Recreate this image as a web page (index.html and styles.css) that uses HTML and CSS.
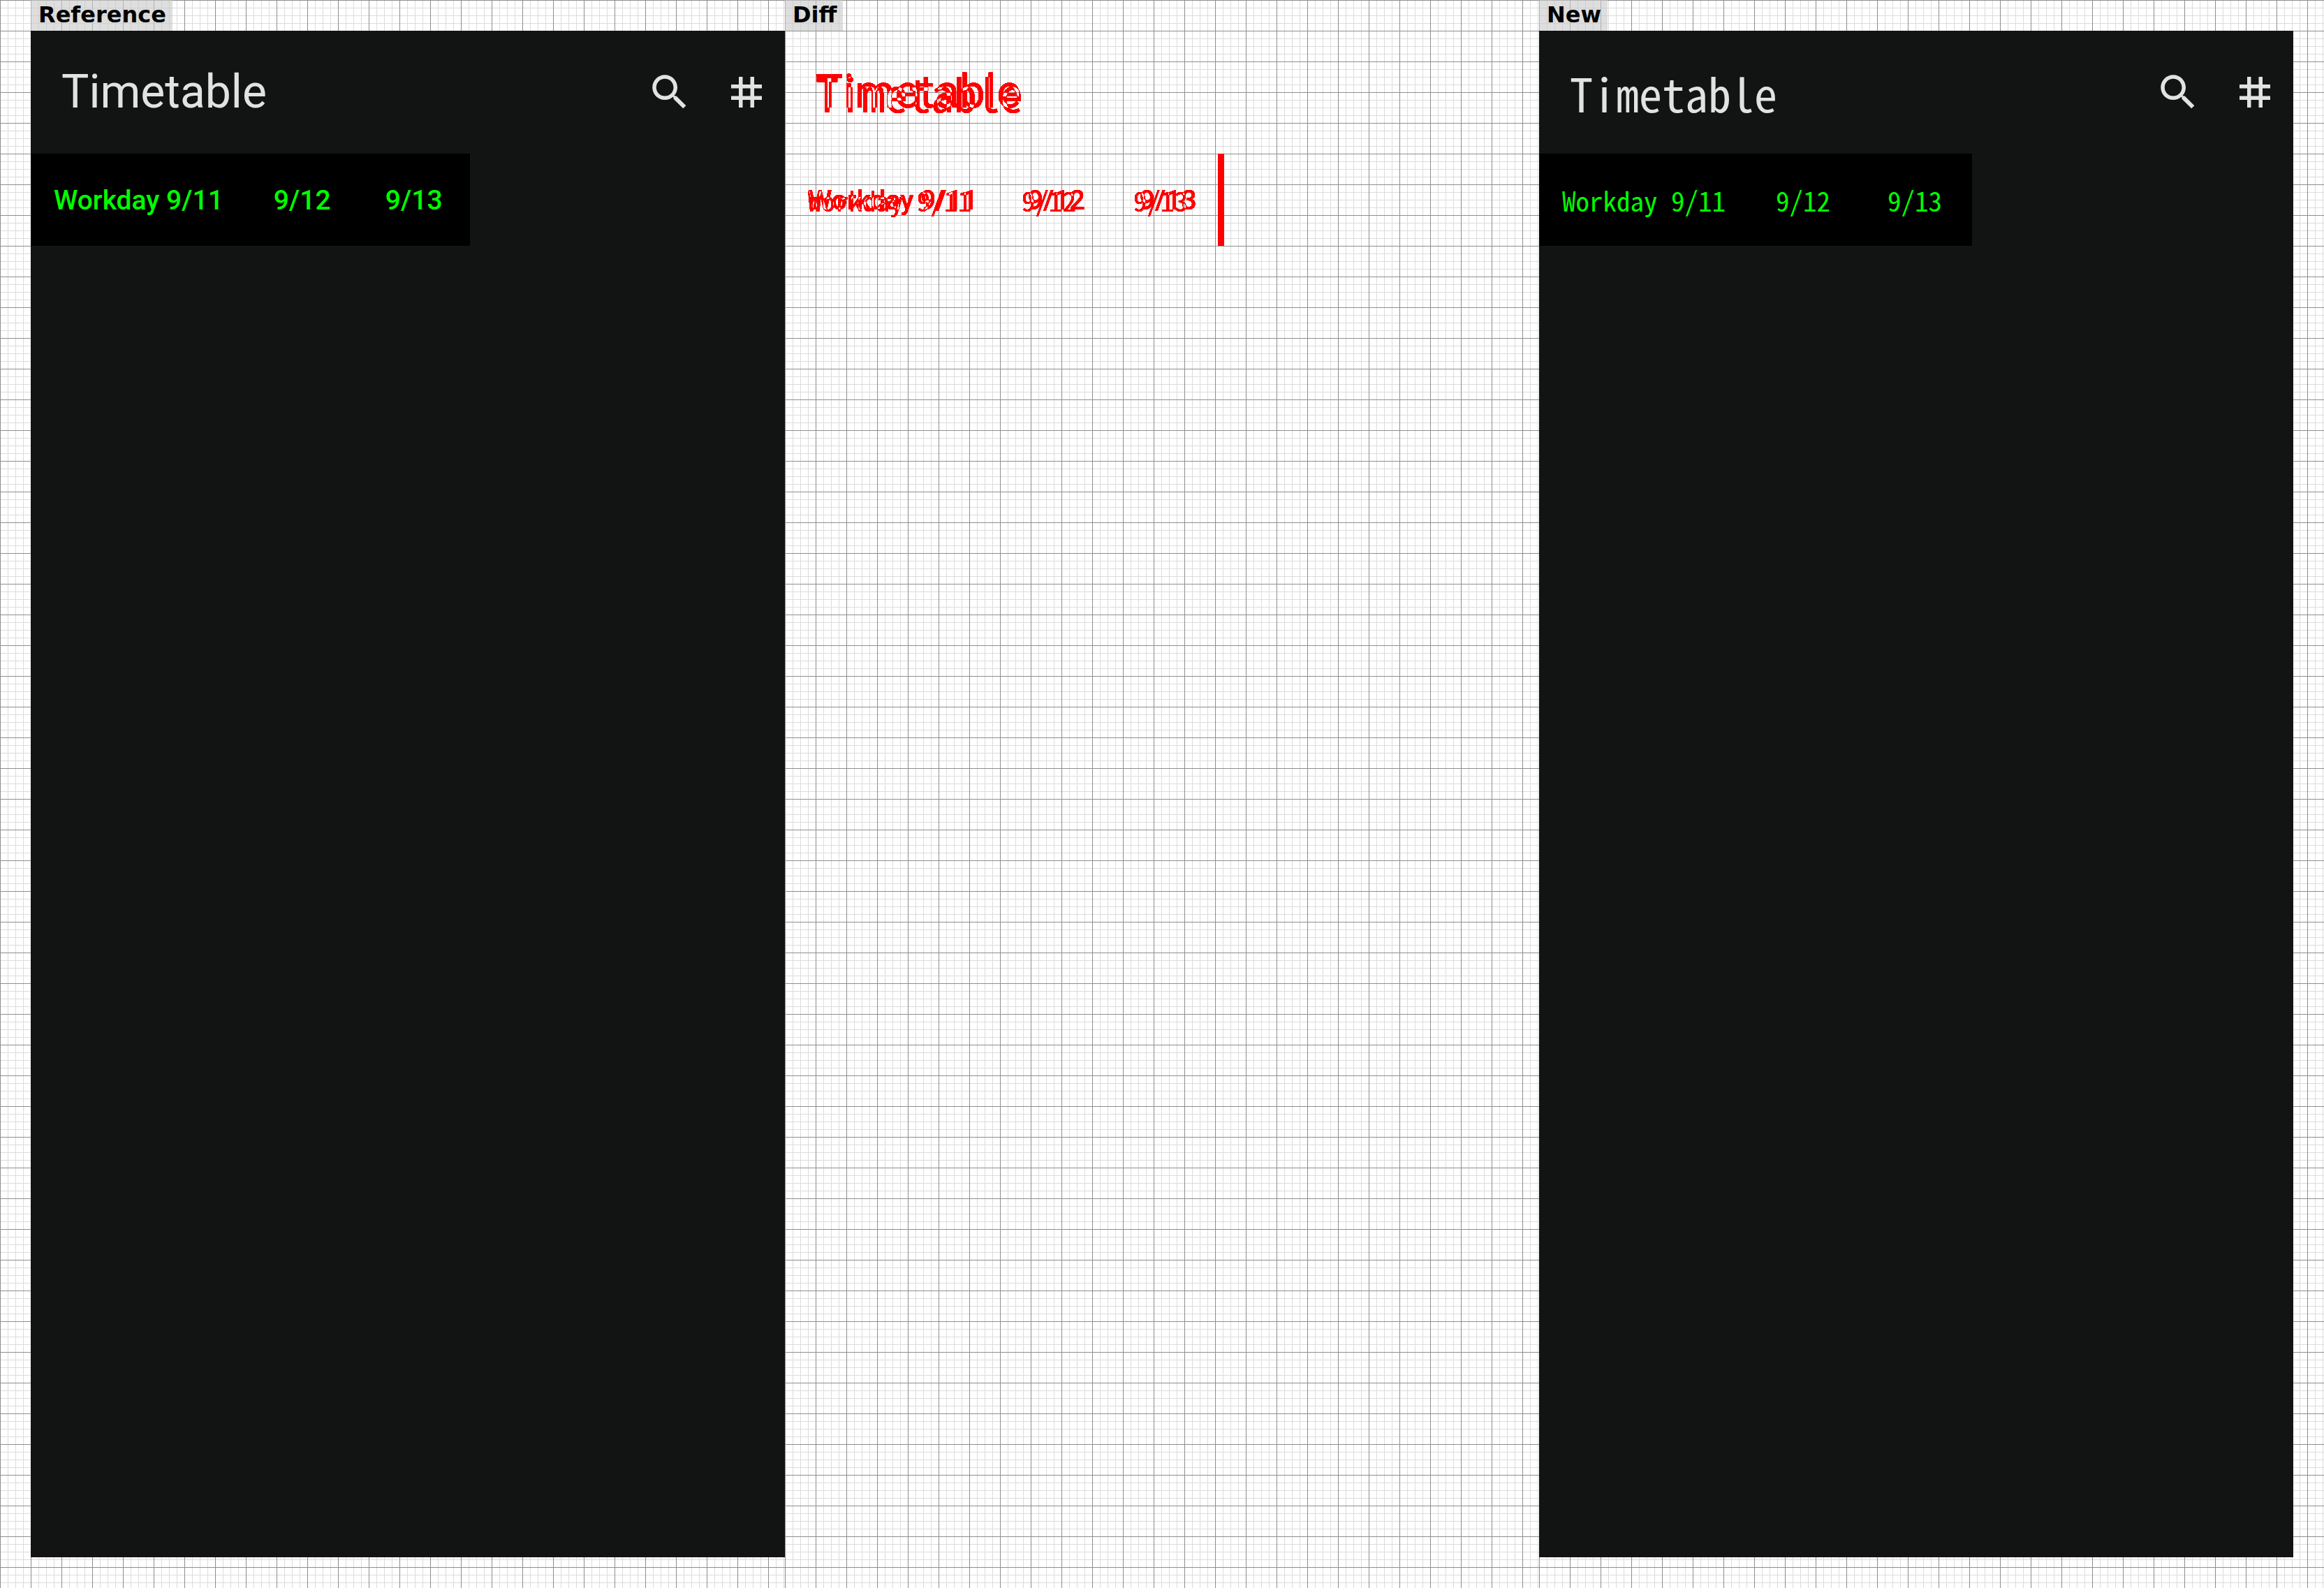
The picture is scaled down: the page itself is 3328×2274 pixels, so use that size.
FILE: index.html
```
<!DOCTYPE html>
<html lang="en">
<head>
  <meta charset="utf-8">
  <title>Timetable comparison</title>
  <link rel="stylesheet" href="styles.css">
</head>
<body>
  <svg class="defs" width="0" height="0" aria-hidden="true">
    <filter id="mark-red" x="0" y="0" width="1" height="1" color-interpolation-filters="sRGB">
      <feColorMatrix type="matrix" values="0 0 0 0 1  0 0 0 0 0  0 0 0 0 0  0 -4 0 0 4"/>
    </filter>
    <symbol id="search" viewBox="0 0 24 24"><path d="M15.5 14h-.79l-.28-.27C15.41 12.59 16 11.11 16 9.5 16 5.91 13.09 3 9.5 3S3 5.91 3 9.5 5.91 16 9.5 16c1.61 0 3.09-.59 4.23-1.57l.27.28v.79l5 4.99L20.49 19l-4.99-5zm-6 0C7.01 14 5 11.99 5 9.5S7.01 5 9.5 5 14 7.01 14 9.5 11.99 14 9.5 14z"/></symbol>
    <symbol id="tag" viewBox="0 0 24 24"><path d="M20 10V8h-4V4h-2v4h-4V4H8v4H4v2h4v4H4v2h4v4h2v-4h4v4h2v-4h4v-2h-4v-4h4zm-6 4h-4v-4h4v4z"/></symbol>
  </svg>
  <main class="compare">
    <section class="panel panel-first">
      <h2 class="label">Reference</h2>
      <div class="screen">
        <header class="top-bar">
          <h1 class="title">Timetable</h1>
          <button class="icon-button" type="button" aria-label="Search"><svg class="icon"><use href="#search"/></svg></button>
          <button class="icon-button" type="button" aria-label="Go to number"><svg class="icon"><use href="#tag"/></svg></button>
        </header>
        <ul class="days">
          <li class="day">Workday 9/11</li>
          <li class="day">9/12</li>
          <li class="day">9/13</li>
        </ul>
      </div>
    </section>
    <section class="panel">
      <h2 class="label">Diff</h2>
      <div class="diff">
        <div class="layer">
          <div class="top-bar"><p class="title">Timetable</p></div>
          <ul class="days">
            <li class="day">Workday 9/11</li>
            <li class="day">9/12</li>
            <li class="day">9/13</li>
          </ul>
        </div>
        <div class="layer pixel">
          <div class="top-bar"><p class="title">Timetable</p></div>
          <ul class="days">
            <li class="day">Workday 9/11</li>
            <li class="day">9/12</li>
            <li class="day">9/13</li>
          </ul>
        </div>
      </div>
    </section>
    <section class="panel panel-last">
      <h2 class="label">New</h2>
      <div class="screen pixel">
        <header class="top-bar">
          <h1 class="title">Timetable</h1>
          <button class="icon-button" type="button" aria-label="Search"><svg class="icon"><use href="#search"/></svg></button>
          <button class="icon-button" type="button" aria-label="Go to number"><svg class="icon"><use href="#tag"/></svg></button>
        </header>
        <ul class="days">
          <li class="day">Workday 9/11</li>
          <li class="day">9/12</li>
          <li class="day">9/13</li>
        </ul>
      </div>
    </section>
  </main>
</body>
</html>
```
FILE: styles.css
```
* {
  box-sizing: border-box;
  margin: 0;
  padding: 0;
}

body {
  background: #fff;
  font-family: Roboto, sans-serif;
}

.defs {
  position: absolute;
}

.compare {
  display: flex;
  min-height: 100vh;
}

/* Graph paper, starting afresh at the left edge of each panel's content. */
.panel {
  display: flex;
  flex: 1 1 0;
  flex-direction: column;
  box-sizing: content-box;
  min-height: calc(100vh - 44px);
  padding-bottom: 44px;
  background-image:
    linear-gradient(to right, #8e8e8e 1px, transparent 1px),
    linear-gradient(to bottom, #8e8e8e 1px, transparent 1px),
    linear-gradient(to right, #dcdcdc 1px, transparent 1px),
    linear-gradient(to bottom, #dcdcdc 1px, transparent 1px);
  background-size: 44px 44px, 44px 44px, 11px 11px, 11px 11px;
}

.panel-first {
  padding-left: 44px;
}

.panel-last {
  padding-right: 44px;
}

.label {
  align-self: flex-start;
  height: 44px;
  padding: 0 9px 0 11px;
  background: rgba(200, 200, 200, 0.6);
  color: #000;
  font: bold 32px/42px "DejaVu Sans", sans-serif;
}

.screen {
  flex: 1;
  background: #121413;
  color: #e2e2e2;
}

.top-bar {
  display: flex;
  align-items: center;
  height: 176px;
  padding-left: 44px;
}

.title {
  flex: 1;
  font-size: 66px;
  font-weight: 400;
  line-height: 88px;
}

.icon-button {
  display: flex;
  align-items: center;
  justify-content: center;
  width: 110px;
  height: 110px;
  border: 0;
  background: none;
  color: inherit;
}

.icon {
  width: 66px;
  height: 66px;
  fill: currentColor;
}

.days {
  display: flex;
  gap: 72px;
  align-items: center;
  width: fit-content;
  height: 132px;
  padding: 2px 33px 0;
  background: #000;
  color: #0f0;
  list-style: none;
}

.day {
  min-width: 88px;
  font-size: 39px;
  font-weight: 500;
  line-height: 55px;
  white-space: nowrap;
}

.pixel {
  font-family: "Noto Sans Mono CJK JP", "Noto Sans Mono CJK SC", "Liberation Mono", monospace;
}

.pixel .title,
.pixel .day {
  font-weight: 300;
}

.pixel .days {
  padding-top: 0;
}

/* Two difference layers cancel where they agree; the filter paints the rest red. */
.diff {
  display: grid;
  flex: 1;
  background: #fff;
  filter: url(#mark-red);
}

.layer {
  grid-area: 1 / 1;
  mix-blend-mode: difference;
  color: #fff;
}

.layer .days {
  background: #fff;
  color: #000;
}
```
